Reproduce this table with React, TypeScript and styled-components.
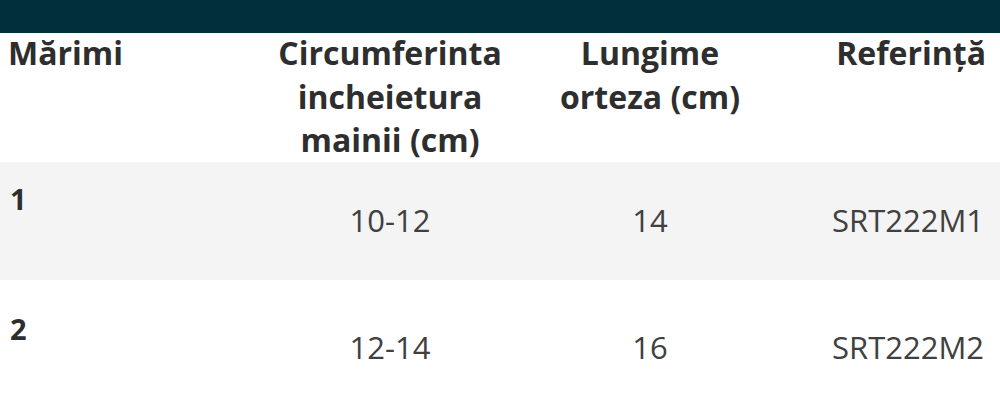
import styled, { createGlobalStyle } from "styled-components";

const GlobalStyle = createGlobalStyle`
    html, body {
        margin: 0;
        padding: 0;
        background: #ffffff;
    }
    body {
        width: 1000px;
        height: 415px;
        overflow: hidden;
        font-family: "Open Sans", "Liberation Sans", sans-serif;
    }
`;

const TopBar = styled.div`
    height: 33px;
    background: #02303a;
`;

const Table = styled.div`
    display: grid;
    grid-template-columns: 260px 260px 260px 220px;
    width: 1000px;
`;

const HeadCell = styled.div<{ $align: "left" | "center" | "right" }>`
    font-size: 32px;
    font-weight: 700;
    line-height: 43.5px;
    color: #2e2e2e;
    text-align: ${(p) => p.$align};
    padding: 0 ${(p) => (p.$align === "right" ? "14px" : "0")} 0
        ${(p) => (p.$align === "left" ? "8px" : "0")};
    margin-top: -2px;
    height: 131px;
`;

const Row = styled.div<{ $height: number; $shaded: boolean }>`
    grid-column: 1 / -1;
    display: grid;
    grid-template-columns: subgrid;
    height: ${(p) => p.$height}px;
    background: ${(p) => (p.$shaded ? "#f4f4f4" : "#ffffff")};
`;

const SizeCell = styled.div<{ $top: number }>`
    align-self: start;
    padding: ${(p) => p.$top}px 0 0 10px;
    font-size: 29px;
    font-weight: 700;
    line-height: 1.2;
    color: #2e2e2e;
`;

const DataCell = styled.div<{ $align: "center" | "right" }>`
    align-self: center;
    font-size: 31px;
    font-weight: 400;
    line-height: 1.2;
    color: #404040;
    text-align: ${(p) => p.$align};
    padding-right: ${(p) => (p.$align === "right" ? "16px" : "0")};
`;

const rows = [
    { size: "1", circ: "10-12", len: "14", ref: "SRT222M1", height: 118, top: 20, shaded: true },
    { size: "2", circ: "12-14", len: "16", ref: "SRT222M2", height: 135, top: 32, shaded: false },
];

export default function App() {
    return (
        <>
            <GlobalStyle />
            <TopBar />
            <Table>
                <HeadCell $align="left">Mărimi</HeadCell>
                <HeadCell $align="center">
                    Circumferinta
                    <br />
                    incheietura
                    <br />
                    mainii (cm)
                </HeadCell>
                <HeadCell $align="center">
                    Lungime
                    <br />
                    orteza (cm)
                </HeadCell>
                <HeadCell $align="right">Referință</HeadCell>
                {rows.map((r) => (
                    <Row key={r.ref} $height={r.height} $shaded={r.shaded}>
                        <SizeCell $top={r.top}>{r.size}</SizeCell>
                        <DataCell $align="center">{r.circ}</DataCell>
                        <DataCell $align="center">{r.len}</DataCell>
                        <DataCell $align="right">{r.ref}</DataCell>
                    </Row>
                ))}
            </Table>
        </>
    );
}
